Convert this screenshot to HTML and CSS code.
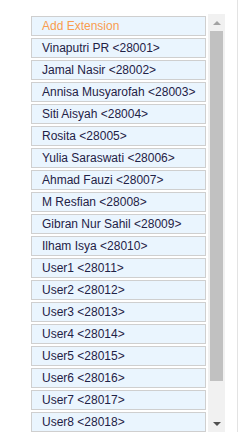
FILE: index.html
```html
<!DOCTYPE html>
<html lang="en">
<head>
   <meta charset="UTF-8">
   <title>Extensions</title>
   <link rel="stylesheet" href="styles.css">
</head>
<body>
   <div class="page">
       <div class="panel">
           <div class="list">
               <div class="item add">Add Extension</div>
               <div class="item">Vinaputri PR &lt;28001&gt;</div>
               <div class="item">Jamal Nasir &lt;28002&gt;</div>
               <div class="item">Annisa Musyarofah &lt;28003&gt;</div>
               <div class="item">Siti Aisyah &lt;28004&gt;</div>
               <div class="item">Rosita &lt;28005&gt;</div>
               <div class="item">Yulia Saraswati &lt;28006&gt;</div>
               <div class="item">Ahmad Fauzi &lt;28007&gt;</div>
               <div class="item">M Resfian &lt;28008&gt;</div>
               <div class="item">Gibran Nur Sahil &lt;28009&gt;</div>
               <div class="item">Ilham Isya &lt;28010&gt;</div>
               <div class="item">User1 &lt;28011&gt;</div>
               <div class="item">User2 &lt;28012&gt;</div>
               <div class="item">User3 &lt;28013&gt;</div>
               <div class="item">User4 &lt;28014&gt;</div>
               <div class="item">User5 &lt;28015&gt;</div>
               <div class="item">User6 &lt;28016&gt;</div>
               <div class="item">User7 &lt;28017&gt;</div>
               <div class="item">User8 &lt;28018&gt;</div>
           </div>
           <div class="scrollbar">
               <div class="arrow up"></div>
               <div class="track"><div class="thumb"></div></div>
               <div class="arrow down"></div>
           </div>
       </div>
       <div class="edge"></div>
   </div>
</body>
</html>
```

FILE: styles.css
```css
* { margin: 0; padding: 0; box-sizing: border-box; }
html, body {
    width: 100%; height: 100%; overflow: hidden;
    background: #fff; font-family: 'Liberation Sans', Arial, sans-serif;
}
.page {
    display: flex;
    height: 100%;
    padding: 14px 0 0 31px;
}
.panel {
    display: flex;
    width: 194px;
    height: 418px;
    overflow: hidden;
}
.list {
    width: 177px;
    padding: 2px 2px 0 0;
    display: flex; flex-direction: column; gap: 2px;
    flex-shrink: 0;
}
.item {
    height: 20px;
    flex-shrink: 0;
    border: 1px solid #cfcfcf;
    background: #eaf5fe;
    color: #1f2246;
    font-size: 12px;
    line-height: 18px;
    padding-left: 10px;
    white-space: nowrap;
}
.item.add { color: #f99c4e; }
.scrollbar {
    width: 17px;
    flex-shrink: 0;
    background: #f1f1f1;
    display: flex; flex-direction: column;
}
.arrow {
    height: 17px;
    display: flex; align-items: center; justify-content: center;
}
.arrow::before {
    content: '';
    width: 0; height: 0;
    border-left: 4px solid transparent;
    border-right: 4px solid transparent;
}
.arrow.up::before { border-bottom: 4px solid #a3a3a3; }
.arrow.down::before { border-top: 4px solid #505050; }
.track {
    flex: 1;
    padding: 0 2px;
}
.thumb {
    height: 350px;
    background: #c1c1c1;
}
.edge {
    margin-left: 12px;
    margin-top: -14px;
    width: 1px;
    height: 432px;
    background: #e3e3e3;
}
```
